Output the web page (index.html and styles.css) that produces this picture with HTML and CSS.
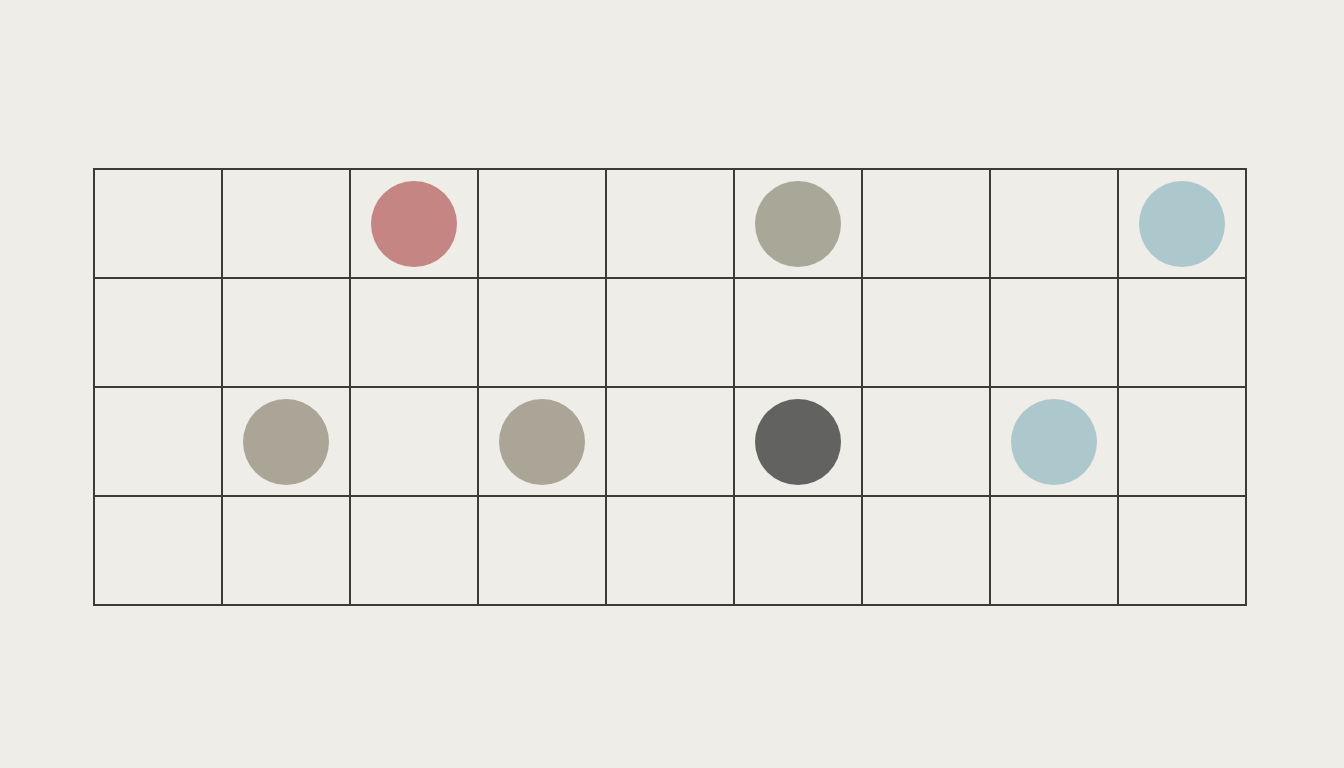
FILE: index.html
```html
<!DOCTYPE html>
<html>
<head>
<meta charset="utf-8">
<link rel="stylesheet" href="styles.css">
</head>
<body>
<main class="stage">
  <div class="board">
    <div class="cell"></div><div class="cell"></div><div class="cell"><span class="dot red"></span></div><div class="cell"></div><div class="cell"></div><div class="cell"><span class="dot sage"></span></div><div class="cell"></div><div class="cell"></div><div class="cell"><span class="dot blue"></span></div>
    <div class="cell"></div><div class="cell"></div><div class="cell"></div><div class="cell"></div><div class="cell"></div><div class="cell"></div><div class="cell"></div><div class="cell"></div><div class="cell"></div>
    <div class="cell"></div><div class="cell"><span class="dot taupe"></span></div><div class="cell"></div><div class="cell"><span class="dot taupe"></span></div><div class="cell"></div><div class="cell"><span class="dot dark"></span></div><div class="cell"></div><div class="cell"><span class="dot blue"></span></div><div class="cell"></div>
    <div class="cell"></div><div class="cell"></div><div class="cell"></div><div class="cell"></div><div class="cell"></div><div class="cell"></div><div class="cell"></div><div class="cell"></div><div class="cell"></div>
  </div>
</main>
</body>
</html>
```
FILE: styles.css
```css
html, body {
  margin: 0;
  padding: 0;
  background: #eeede8;
  width: 1344px;
  height: 768px;
  overflow: hidden;
}
.stage {
  padding: 168px 0 0 93px;
}
.board {
  display: grid;
  grid-template-columns: repeat(9, 128px);
  grid-template-rows: repeat(4, 109px);
  width: max-content;
  border-top: 2px solid #3b3b3a;
  border-left: 2px solid #3b3b3a;
}
.cell {
  box-sizing: border-box;
  border-right: 2px solid #3b3b3a;
  border-bottom: 2px solid #3b3b3a;
  display: flex;
  align-items: center;
  justify-content: center;
}
.dot {
  display: block;
  width: 86px;
  height: 86px;
  border-radius: 50%;
}
.red { background: #c58583; }
.sage { background: #a8a798; }
.blue { background: #adc8cd; }
.taupe { background: #aaa597; }
.dark { background: #626261; }
```
